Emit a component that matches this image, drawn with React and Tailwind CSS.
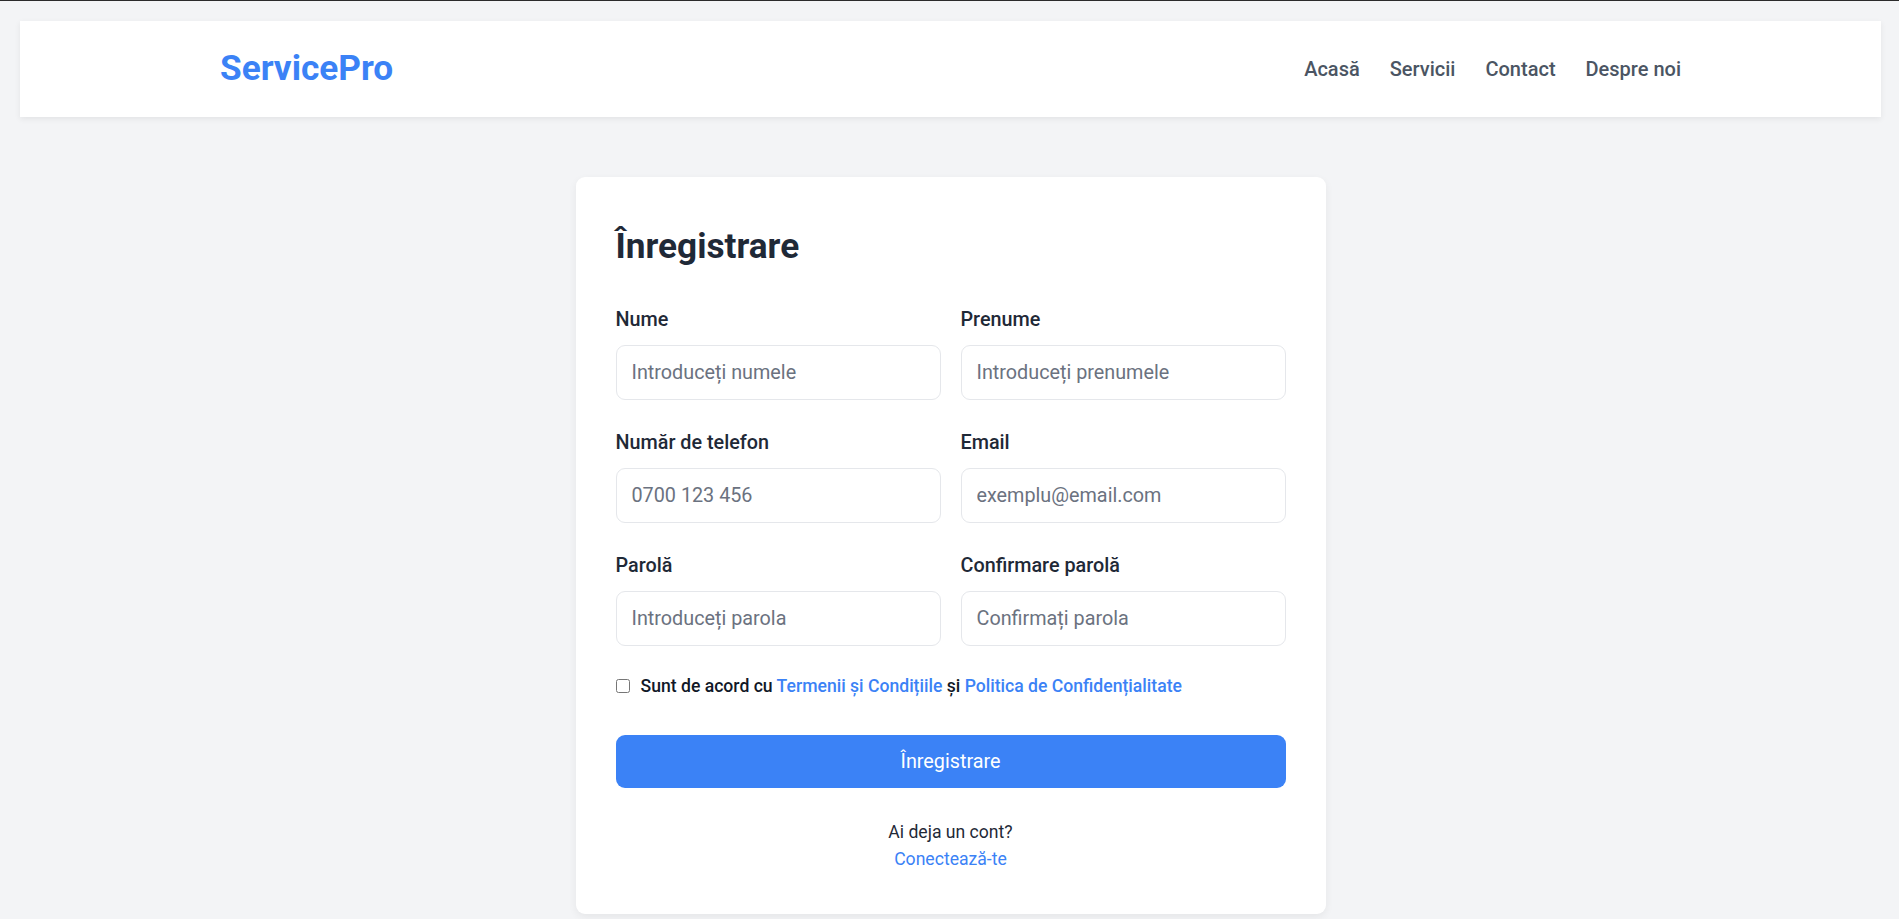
import React, { useState } from 'react';

const font = { fontFamily: 'Roboto, "Noto Sans", Arial, sans-serif' };

function Field({ label, type = 'text', placeholder }) {
  return (
    <div>
      <label className="block text-[19.8px] leading-[28px] font-medium text-[#1f2937] mb-[11px]">{label}</label>
      <input
        type={type}
        placeholder={placeholder}
        className="block w-full h-[55px] px-[15px] text-[19.8px] border border-[#e5e7eb] rounded-[9px] bg-white text-[#1f2937] placeholder:text-[#6b7280] focus:outline-none"
      />
    </div>
  );
}

export default function App() {
  const [agree, setAgree] = useState(false);

  return (
    <div style={font} className="min-h-screen bg-[#f3f4f6] border-t border-[#2b2b2b]">
      {/* Header */}
      <div className="pt-[20px] pl-[20px] pr-[18px]">
        <header className="bg-white h-[96px] shadow-[0_2px_6px_rgba(0,0,0,0.07)]">
          <div className="max-w-[1461px] mx-auto h-full flex items-center justify-between">
            <a className="text-[35.2px] font-bold text-[#3b82f6] leading-none">ServicePro</a>
            <nav className="flex items-center gap-[30px] text-[20px] font-medium text-[#4b5563]">
              <a>Acasă</a>
              <a>Servicii</a>
              <a>Contact</a>
              <a>Despre noi</a>
            </nav>
          </div>
        </header>
      </div>

      {/* Register card */}
      <main className="pl-[20px] pr-[18px] pt-[60px]">
        <div className="w-[750px] mx-auto bg-white rounded-[9px] shadow-[0_3px_8px_rgba(0,0,0,0.06)] px-[40px] pt-[49px] pb-[42px]">
          <h1 className="text-[35.2px] leading-[41px] font-bold text-[#1f2937] mb-[39px]">Înregistrare</h1>

          <div className="grid grid-cols-2 gap-x-[20px] gap-y-[29px]">
            <Field label="Nume" placeholder="Introduceți numele" />
            <Field label="Prenume" placeholder="Introduceți prenumele" />
            <Field label="Număr de telefon" type="tel" placeholder="0700 123 456" />
            <Field label="Email" type="email" placeholder="exemplu@email.com" />
            <Field label="Parolă" type="password" placeholder="Introduceți parola" />
            <Field label="Confirmare parolă" type="password" placeholder="Confirmați parola" />
          </div>

          <div className="flex items-center gap-[11px] mt-[27px] text-[17.6px] leading-[26.4px] font-medium text-[#111827]">
            <input
              type="checkbox"
              checked={agree}
              onChange={(e) => setAgree(e.target.checked)}
              className="w-[14px] h-[14px] m-0"
            />
            <span>
              Sunt de acord cu <a className="text-[#3b82f6]">Termenii și Condițiile</a> și{' '}
              <a className="text-[#3b82f6]">Politica de Confidențialitate</a>
            </span>
          </div>

          <button className="mt-[36px] w-full h-[53px] bg-[#3b82f6] hover:bg-blue-600 text-white text-[19.8px] rounded-[9px]">
            Înregistrare
          </button>

          <div className="mt-[31px] text-center text-[17.6px] leading-[26.4px]">
            <p className="text-[#1f2937]">Ai deja un cont?</p>
            <a className="text-[#3b82f6]">Conectează-te</a>
          </div>
        </div>
      </main>
    </div>
  );
}
